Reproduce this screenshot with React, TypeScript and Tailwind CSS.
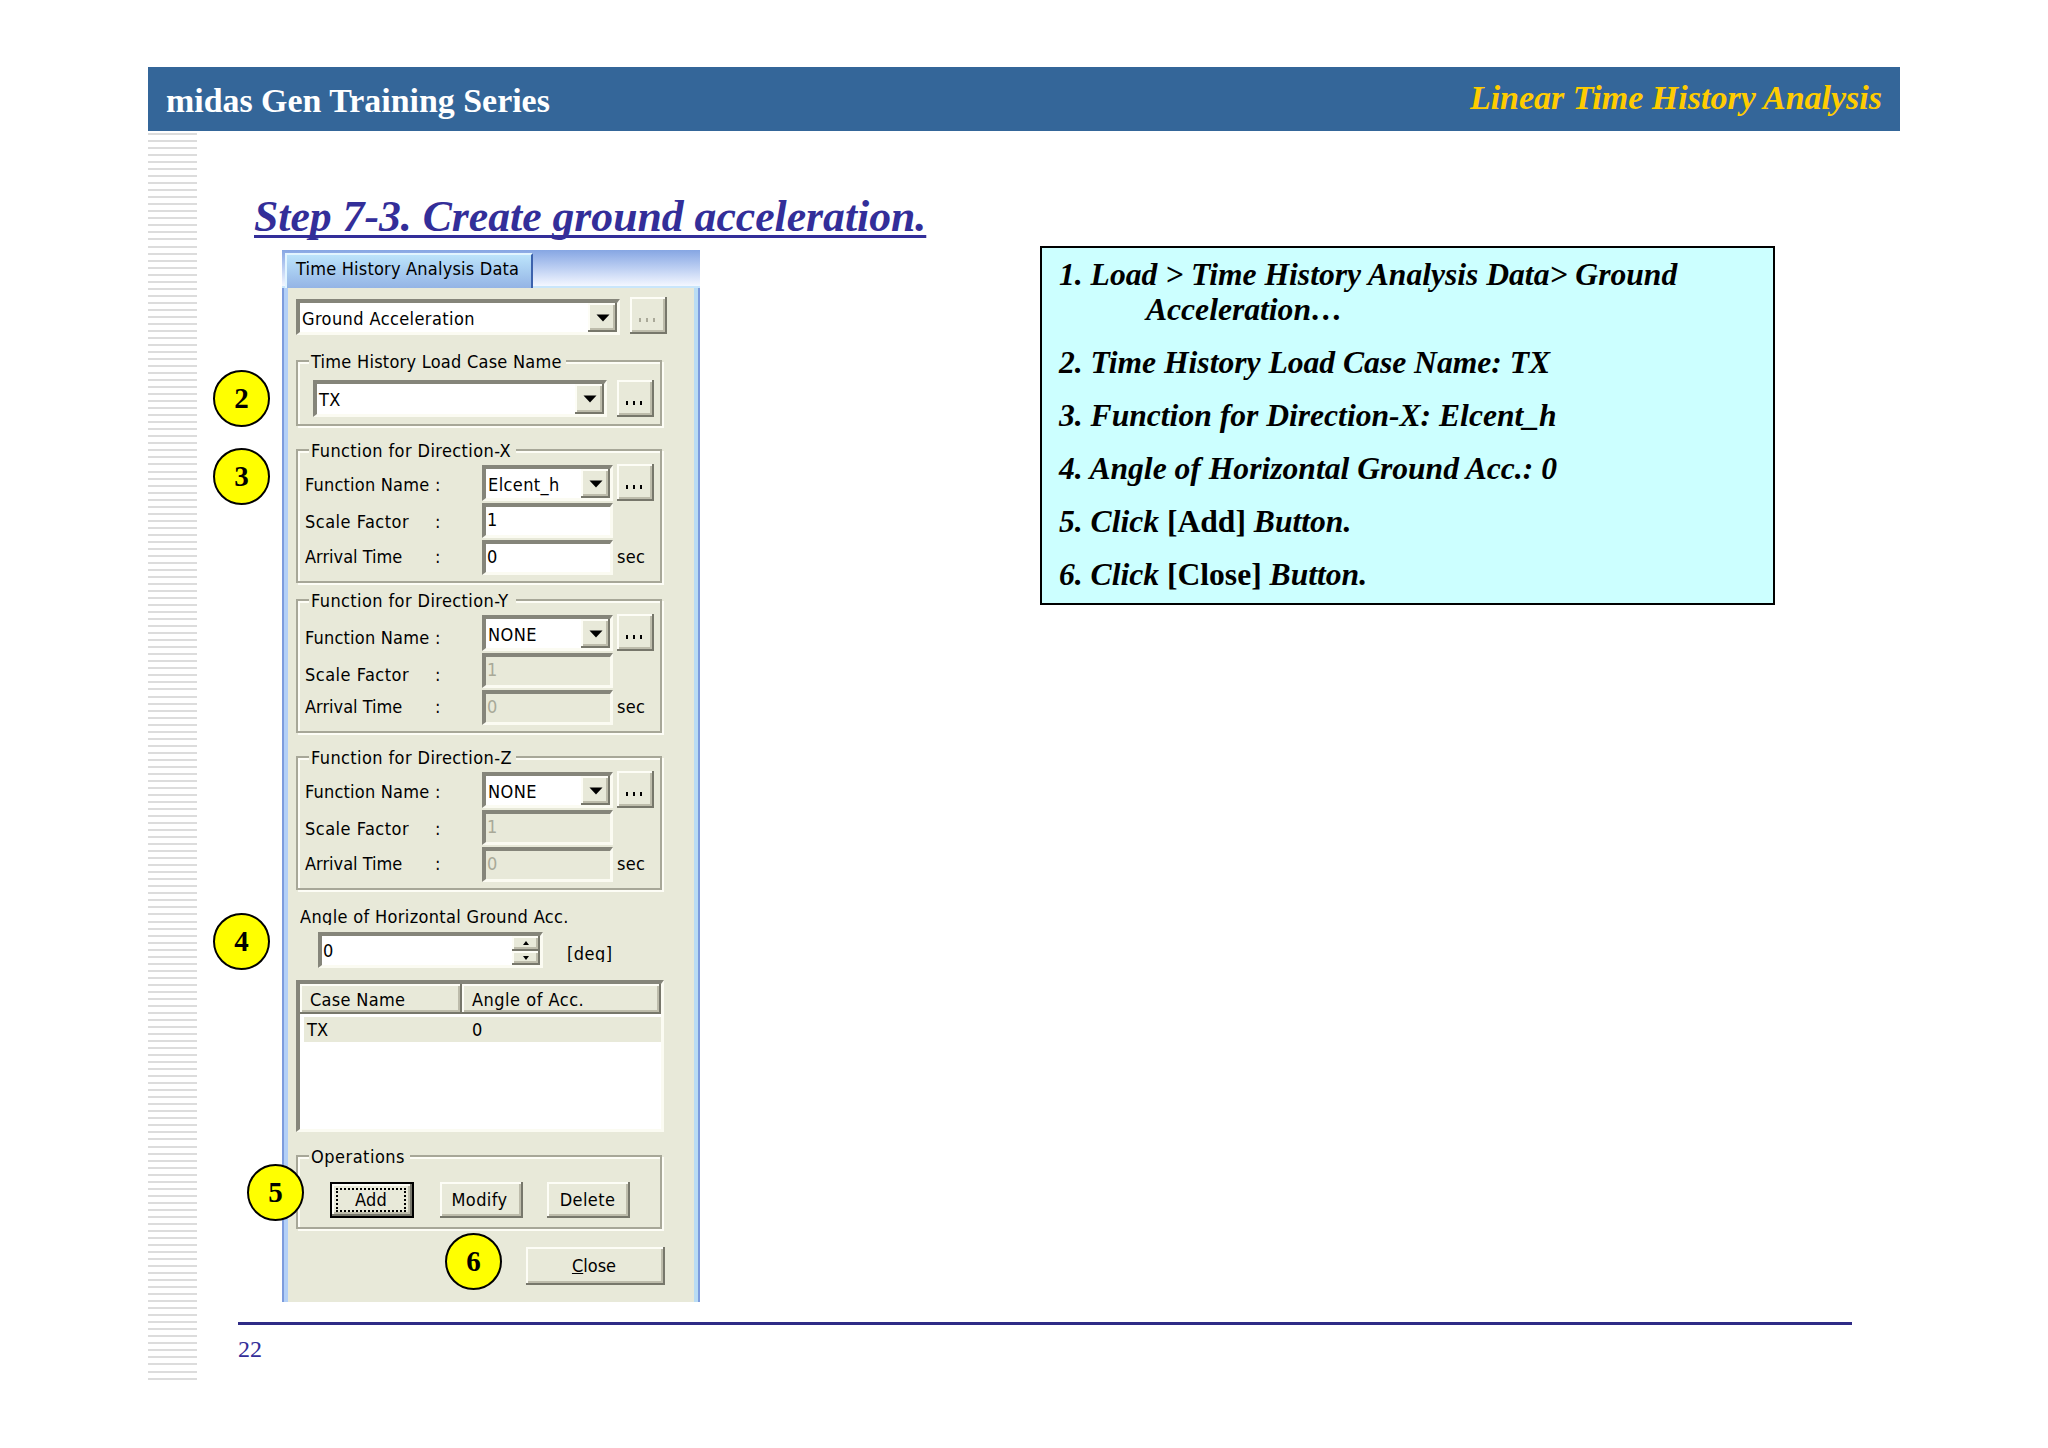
import type { ReactNode } from "react"
import clsx from "clsx"

const steps: { id: number; text: ReactNode }[] = [
  { id: 2, text: "2. Time History Load Case Name: TX" },
  { id: 3, text: "3. Function for Direction-X: Elcent_h" },
  { id: 4, text: "4. Angle of Horizontal Ground Acc.: 0" },
  {
    id: 5,
    text: (
      <>
        5. Click <span className="not-italic">[Add]</span> Button.
      </>
    ),
  },
  {
    id: 6,
    text: (
      <>
        6. Click <span className="not-italic">[Close]</span> Button.
      </>
    ),
  },
]

const stripes = Array.from({ length: 178 }, (_, i) => i)

// Sunken frame shared by inputs, combos and the list
const sunken =
  "border-t-[4px] border-l-[4px] border-r-[3px] border-b-[3px] border-t-[#85857a] border-l-[#85857a] border-r-[#fbfbf2] border-b-[#fbfbf2]"

const raised =
  "bg-[#e8e9d9] shadow-[inset_-2px_-2px_0_#77776b,inset_2px_2px_0_#fdfdf6,inset_-4px_-4px_0_#bdbcab]"

function Arrow() {
  return (
    <svg viewBox="0 0 14 8" className="h-[8px] w-[14px]">
      <path d="M0.5 0.5h13L7 7.5z" fill="#000" />
    </svg>
  )
}

function Combo({ value, className }: { value: string; className: string }) {
  return (
    <div className={clsx("flex bg-white", sunken, className)}>
      <span className="flex-1 pl-[2px] leading-[31px] tracking-[0.4px]">{value}</span>
      <span className={clsx("flex h-full w-[29px] items-center justify-center", raised)}>
        <Arrow />
      </span>
    </div>
  )
}

function Field({ value, disabled, className }: { value: string; disabled?: boolean; className: string }) {
  return (
    <div
      className={clsx(
        "pl-[1px] leading-[26px]",
        sunken,
        disabled ? "bg-[#e8e9d9] text-[#a9a998]" : "bg-white",
        className,
      )}
    >
      {value}
    </div>
  )
}

function DotsButton({ disabled, className }: { disabled?: boolean; className?: string }) {
  return (
    <div
      className={clsx(
        "flex h-[37px] w-[37px] items-end justify-center gap-[5px] pr-[4px] pb-[12px]",
        raised,
        className,
      )}
    >
      {[0, 1, 2].map((i) => (
        <span key={i} className={clsx("h-[4px] w-[2px]", disabled ? "bg-[#aaa999]" : "bg-black")} />
      ))}
    </div>
  )
}

function Group({ title, titleClass, className, children }: {
  title: string
  titleClass: string
  className: string
  children: ReactNode
}) {
  return (
    <div
      className={clsx(
        "relative w-[366px] border-2 border-[#a7a798] shadow-[2px_2px_0_#fdfdf6,inset_2px_2px_0_#fdfdf6]",
        className,
      )}
    >
      <span
        className={clsx(
          "absolute -top-[14px] left-[11px] bg-[#e8e9d9] pl-[2px] leading-[27px] whitespace-nowrap",
          titleClass,
        )}
      >
        {title}
      </span>
      {children}
    </div>
  )
}

function DirectionGroup({ axis, fn, disabled, lowered, className }: {
  axis: string
  fn: string
  disabled?: boolean
  lowered?: boolean
  className: string
}) {
  const labels = [
    { name: "Function Name", cls: "tracking-[0.2px]" },
    { name: "Scale Factor", cls: "tracking-[0.5px]" },
    { name: "Arrival Time", cls: "" },
  ]
  return (
    <Group
      title={`Function for Direction-${axis}`}
      titleClass="w-[207px] tracking-[0.4px]"
      className={clsx("flex h-[134px]", className)}
    >
      <div className={clsx("flex w-[177px] flex-col pl-[7px]", lowered ? "pt-[25px]" : "pt-[22px]")}>
        {labels.map((l, i) => (
          <div
            key={l.name}
            className={clsx("flex h-[24px] leading-[24px]", i === 1 && "mt-[13px]", i === 2 && (lowered ? "mt-[8px]" : "mt-[11px]"))}
          >
            <span className={clsx("w-[130px]", l.cls)}>{l.name}</span>
            <span>:</span>
          </div>
        ))}
      </div>
      <div className="ml-[7px] flex w-[131px] flex-col pt-[14px]">
        <Combo value={fn} className="h-[36px]" />
        <Field value="1" disabled={disabled} className="mt-[2px] h-[35px]" />
        <Field value="0" disabled={disabled} className="mt-[2px] h-[35px]" />
      </div>
      <div className="ml-[4px] flex flex-col pt-[13px]">
        <DotsButton />
        <span className="mt-[44px] leading-[24px] tracking-[0.3px]">sec</span>
      </div>
    </Group>
  )
}

function Marker({ n, className }: { n: number; className: string }) {
  return (
    <div
      className={clsx(
        "absolute flex size-[57px] items-center justify-center rounded-full border-[2.5px] border-black bg-[#ffff00] pt-px text-[29px] font-bold",
        className,
      )}
    >
      {n}
    </div>
  )
}

function Dialog() {
  return (
    <div className="flex h-[1052px] w-[418px] flex-col font-['DejaVu_Sans_Condensed','DejaVu_Sans',sans-serif] text-[18px] text-black [font-stretch:condensed]">
      <div className="flex h-[38px] border-b-2 border-[#c9e6fb] bg-gradient-to-b from-[#86a6e3] to-[#f4f7ff] pt-[3px] pl-[3px]">
        <div className="h-[35px] w-[248px] border-t-2 border-r-2 border-l-2 border-t-[#e2f5ff] border-r-[#3c62ad] border-l-[#e2f5ff] bg-gradient-to-b from-[#bce4fb] to-[#94b4e5] pl-[9px] leading-[28px] tracking-[0.2px] whitespace-nowrap">
          Time History Analysis Data
        </div>
      </div>
      <div className="flex flex-1 flex-col border-r-2 border-l-2 border-[#7d9cdd]">
        <div className="flex flex-1 flex-col border-r-[4px] border-l-[4px] border-r-[#b9dcf4] border-l-[#b3d0f7] bg-[#e8e9d9] pl-[8px]">
          <div className="mt-[9px] flex">
            <Combo value="Ground Acceleration" className="mt-[2px] h-[36px] w-[324px]" />
            <DotsButton disabled className="ml-[10px]" />
          </div>

          <Group
            title="Time History Load Case Name"
            titleClass="w-[257px] tracking-[0.25px]"
            className="mt-[25px] flex h-[66px] pt-[18px] pl-[15px]"
          >
            <Combo value="TX" className="h-[37px] w-[294px]" />
            <DotsButton className="ml-[10px]" />
          </Group>

          <DirectionGroup axis="X" fn="Elcent_h" className="mt-[23px]" />
          <DirectionGroup axis="Y" fn="NONE" disabled lowered className="mt-[16px]" />
          <DirectionGroup axis="Z" fn="NONE" disabled className="mt-[23px]" />

          {/* The static labels are cut off by their own boxes */}
          <div className="mt-[14px] ml-[4px] h-[21px] overflow-hidden leading-[26px] tracking-[0.34px] whitespace-nowrap">
            Angle of Horizontal Ground Acc.
          </div>
          <div className="mt-[7px] ml-[22px] flex">
            <div className={clsx("flex h-[36px] w-[225px] bg-white", sunken)}>
              <span className="flex-1 pl-[1px] leading-[29px]">0</span>
              <span className="flex w-[28px] flex-col">
                <span className={clsx("flex flex-1 items-center justify-center", raised)}>
                  <svg viewBox="0 0 6 4" className="h-[4px] w-[6px]">
                    <path d="M0 4h6L3 0z" />
                  </svg>
                </span>
                <span className={clsx("flex flex-1 items-center justify-center", raised)}>
                  <svg viewBox="0 0 6 4" className="h-[4px] w-[6px]">
                    <path d="M0 0h6L3 4z" />
                  </svg>
                </span>
              </span>
            </div>
            <div className="mt-[13px] ml-[24px] h-[17px] overflow-hidden">
              <span className="-mt-[3px] block leading-[24px] tracking-[0.5px]">[deg]</span>
            </div>
          </div>

          <div className={clsx("mt-[12px] h-[152px] w-[368px] bg-white", sunken)}>
            <div className="flex h-[30px] leading-[32px]">
              <span className={clsx("w-[162px] pl-[10px] tracking-[0.3px]", raised)}>Case Name</span>
              <span className={clsx("flex-1 pl-[10px] tracking-[0.5px]", raised)}>Angle of Acc.</span>
            </div>
            <div className="mt-[3px] ml-[4px] flex h-[25px] bg-[#e8e9d9] leading-[26px]">
              <span className="w-[168px] pl-[3px]">TX</span>
              <span>0</span>
            </div>
          </div>

          <Group
            title="Operations"
            titleClass="w-[101px] tracking-[0.5px]"
            className="mt-[23px] flex h-[74px] pt-[25px] pl-[32px]"
          >
            <div className="flex h-[36px] w-[84px] border-2 border-black">
              <div className={clsx("flex-1 p-[4px] pr-[6px]", raised)}>
                <div className="h-full border-2 border-dotted border-black text-center leading-[20px] tracking-[0.3px]">
                  Add
                </div>
              </div>
            </div>
            <div className={clsx("ml-[26px] h-[36px] w-[83px] pr-[4px] text-center leading-[36px] tracking-[0.4px]", raised)}>
              Modify
            </div>
            <div className={clsx("ml-[24px] h-[36px] w-[83px] pr-[2px] text-center leading-[36px] tracking-[0.4px]", raised)}>
              Delete
            </div>
          </Group>

          <div className={clsx("mt-[18px] ml-[230px] h-[38px] w-[139px] pr-[3px] text-center leading-[38px]", raised)}>
            <span className="underline">C</span>lose
          </div>
        </div>
      </div>
    </div>
  )
}

export default function App() {
  return (
    <div className="h-[1448px] w-[2048px] overflow-hidden bg-white pt-[67px] pl-[148px] font-['Liberation_Serif',serif]">
      <header className="flex h-[64px] w-[1752px] justify-between bg-[#346699] font-bold whitespace-nowrap">
        <h1 className="pl-[18px] text-[33.9px] leading-[68px] text-white">midas Gen Training Series</h1>
        <p className="pr-[18px] text-[34px] leading-[62px] text-[#ffcc00] italic">Linear Time History Analysis</p>
      </header>

      <div className="flex">
        {/* Ruled strip on the left margin */}
        <div className="mt-[2px] flex h-[1249px] w-[49px] flex-col justify-between">
          {stripes.map((i) => (
            <div key={i} className="h-[2px] bg-[#dcdcdc]" />
          ))}
        </div>

        <main className="relative ml-[41px] flex w-[1614px] flex-col">
          <h2 className="mt-[58px] ml-[16px] h-[61px] text-[43.7px] leading-[54px] font-bold whitespace-nowrap text-[#332e99] italic underline decoration-[3px] underline-offset-[4px] [text-decoration-skip-ink:none]">
            Step 7-3. Create ground acceleration.
          </h2>

          <div className="flex">
            <div className="ml-[44px]">
              <Dialog />
            </div>
            <section className="-mt-[4px] ml-[340px] h-[359px] w-[735px] border-[2.5px] border-black bg-[#ccffff] pt-[10px] pl-[17px] text-[31.6px] font-bold whitespace-nowrap text-black italic">
              <p className="leading-[34.5px]">1. Load &gt; Time History Analysis Data&gt; Ground</p>
              <p className="pl-[87px] leading-[34.5px]">Acceleration…</p>
              {steps.map((s) => (
                <p key={s.id} className="mt-[18.7px] leading-[34.5px]">
                  {s.text}
                </p>
              ))}
            </section>
          </div>

          <footer className="mt-[20px] border-t-[3px] border-[#2f2b86]">
            <p className="mt-[10px] text-[24px] leading-[28px] text-[#332e99]">22</p>
          </footer>

          <Marker n={2} className="top-[239px] -left-[25px]" />
          <Marker n={3} className="top-[317px] -left-[25px]" />
          <Marker n={4} className="top-[782px] -left-[25px]" />
          <Marker n={5} className="top-[1033px] left-[9px]" />
          <Marker n={6} className="top-[1102px] left-[207px]" />
        </main>
      </div>
    </div>
  )
}
